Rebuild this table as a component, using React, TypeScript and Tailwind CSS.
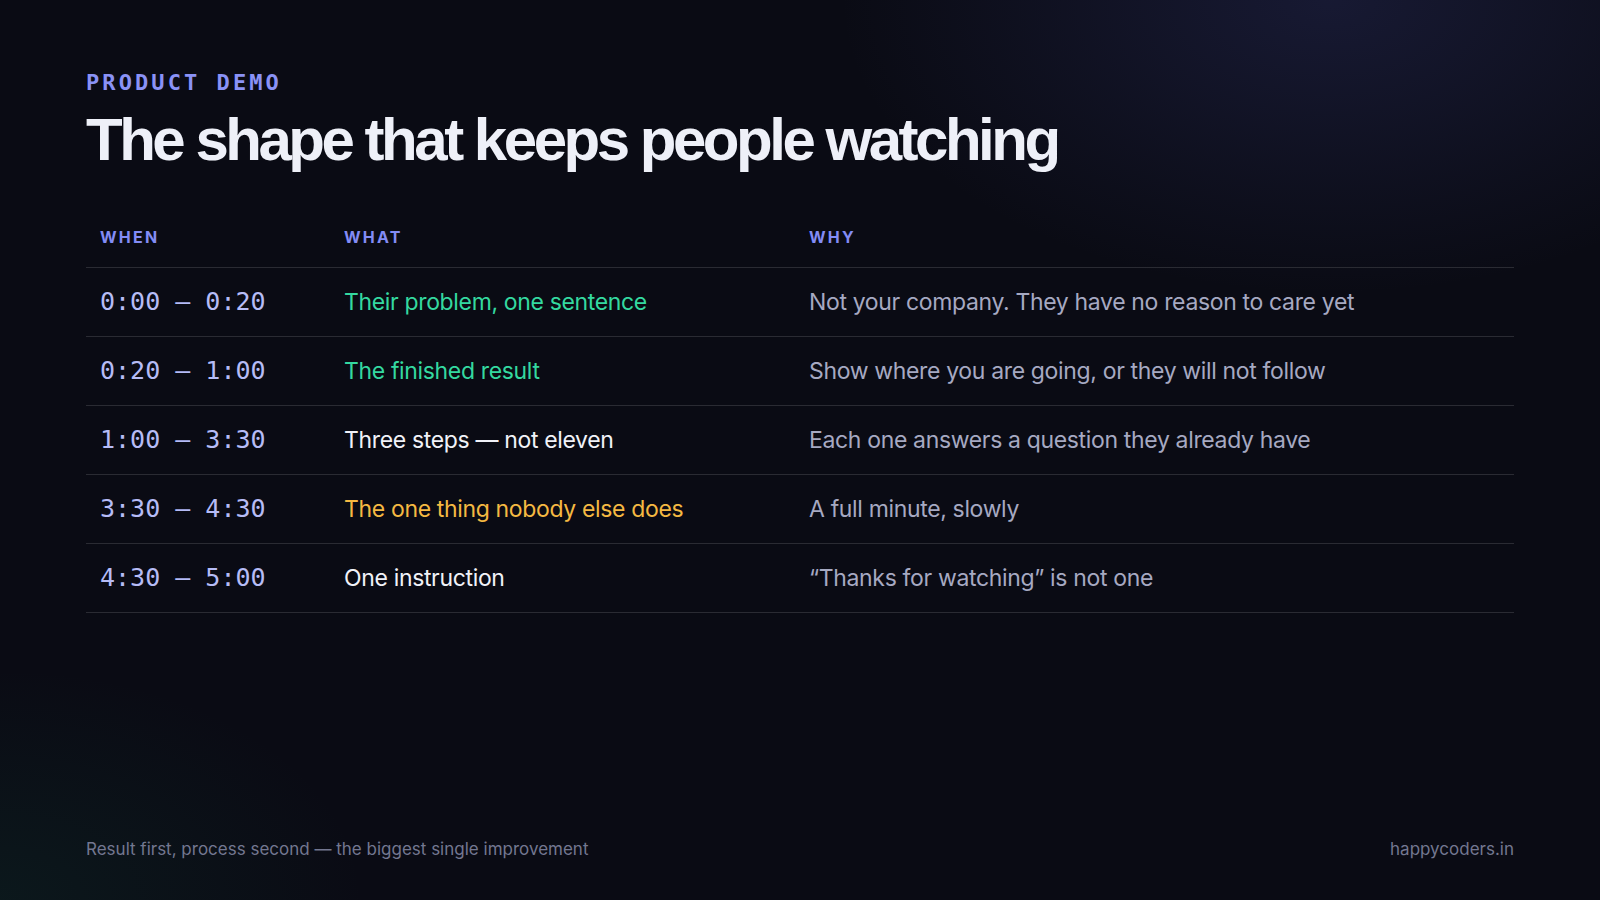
import React from "react";

const rows = [
  { when: "0:00 — 0:20", what: "Their problem, one sentence", whatColor: "text-[#34d9a0]", why: "Not your company. They have no reason to care yet" },
  { when: "0:20 — 1:00", what: "The finished result", whatColor: "text-[#34d9a0]", why: "Show where you are going, or they will not follow" },
  { when: "1:00 — 3:30", what: "Three steps — not eleven", whatColor: "text-[#f1f2f8]", why: "Each one answers a question they already have" },
  { when: "3:30 — 4:30", what: "The one thing nobody else does", whatColor: "text-[#f5b942]", why: "A full minute, slowly" },
  { when: "4:30 — 5:00", what: "One instruction", whatColor: "text-[#f1f2f8]", why: "“Thanks for watching” is not one" },
];

export default function App() {
  return (
    <div className="relative w-[1600px] h-[900px] overflow-hidden bg-[#0a0b14] font-['Inter',sans-serif]">
      <div className="pointer-events-none absolute inset-0 bg-[radial-gradient(ellipse_700px_420px_at_1330px_0px,rgba(70,76,160,0.22),transparent_70%)]" />
      <div className="pointer-events-none absolute inset-0 bg-[radial-gradient(ellipse_520px_330px_at_0px_900px,rgba(20,110,80,0.13),transparent_70%)]" />
      <div className="relative flex h-full flex-col px-[86px] pt-[72px] pb-[39px]">
        <div className="font-['DejaVu_Sans_Mono',monospace] text-[22px] leading-[22px] font-bold tracking-[0.14em] text-[#8a92f6]">
          PRODUCT DEMO
        </div>
        <h1 className="mt-[16px] font-['Liberation_Sans',Arial,sans-serif] text-[60px] leading-[60px] font-bold tracking-[-0.058em] text-[#eef0f8]">
          The shape that keeps people watching
        </h1>

        <div className="mt-[57px]">
          <div className="grid grid-cols-[244px_465px_1fr] border-b border-[#2a2b33] pb-[20px]">
            {["WHEN", "WHAT", "WHY"].map((h) => (
              <div key={h} className="px-[14px] text-[16px] leading-[20px] font-bold tracking-[0.14em] text-[#838cf5]">
                {h}
              </div>
            ))}
          </div>
          {rows.map((r) => (
            <div key={r.when} className="grid h-[69px] grid-cols-[244px_465px_1fr] items-center border-b border-[#2a2b33]">
              <div className="px-[14px] font-['DejaVu_Sans_Mono',monospace] text-[25px] leading-[30px] text-[#b6bcf6]">
                {r.when}
              </div>
              <div className={"px-[14px] text-[23px] leading-[30px] tracking-[-0.015em] " + r.whatColor}>{r.what}</div>
              <div className="px-[14px] text-[23px] leading-[30px] tracking-[-0.015em] text-[#a6a9c2]">{r.why}</div>
            </div>
          ))}
        </div>

        <div className="mt-auto flex items-center justify-between text-[17px] leading-[24px] text-[#737790]">
          <span>Result first, process second — the biggest single improvement</span>
          <span>happycoders.in</span>
        </div>
      </div>
    </div>
  );
}
